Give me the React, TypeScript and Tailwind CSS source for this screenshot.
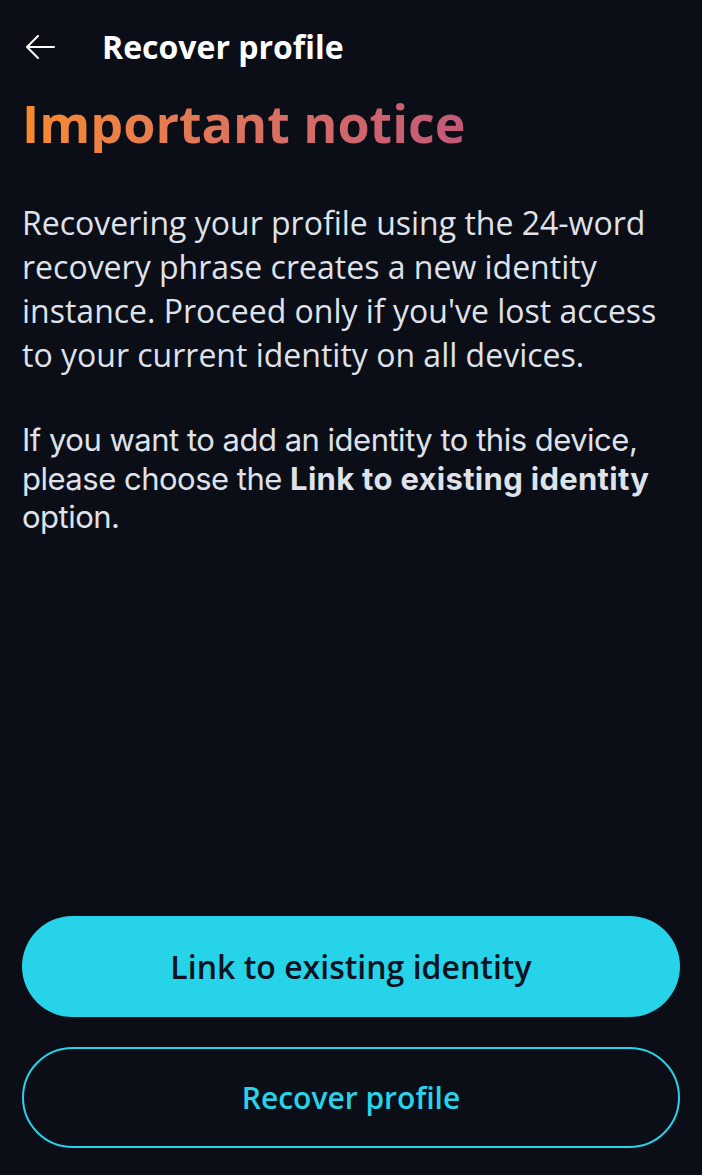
export default function App() {
  return (
    <div className="min-h-[1175px] bg-[#0b0e16] flex flex-col px-[22px] pb-[27px] font-['Open_Sans',sans-serif]">
      {/* top bar */}
      <div className="flex items-center h-[96px] pb-[2px]">
        <svg width="32" height="24" viewBox="0 0 32 24" fill="none" className="ml-[3px]">
          <path d="M2 12H29M13 1L2 12L13 23" stroke="white" strokeWidth="2" strokeLinecap="round" strokeLinejoin="round" />
        </svg>
        <h2 className="ml-[45px] text-[32px] font-bold text-white">Recover profile</h2>
      </div>

      <h1 className="-mt-[3px] text-[52px] leading-[60px] font-bold bg-gradient-to-r from-[#f78a2a] to-[#c25878] bg-clip-text text-transparent w-fit pr-[2px]">
        Important notice
      </h1>

      <p className="mt-[48px] text-[32px] leading-[44px] text-[#dfe2ea]">
        Recovering your profile using the 24-word recovery phrase creates a new identity instance. Proceed only if
        you've lost access to your current identity on all devices.
      </p>

      <p className="mt-[44px] text-[31px] leading-[38.5px] text-[#dfe2ea] font-['Inter',sans-serif] tracking-[-0.5px]">
        If you want to add an identity to this device, please choose the{" "}
        <span className="font-bold tracking-[0.3px]">Link to existing identity</span> option.
      </p>

      <div className="mt-auto flex flex-col gap-[30px]">
        <button className="h-[101px] rounded-full bg-[#26d3e9] text-[#0d1220] text-[32px] font-semibold">
          Link to existing identity
        </button>
        <button className="h-[101px] rounded-full border-2 border-[#26d3e9] text-[#26d3e9] text-[30px] font-semibold">
          Recover profile
        </button>
      </div>
    </div>
  );
}
